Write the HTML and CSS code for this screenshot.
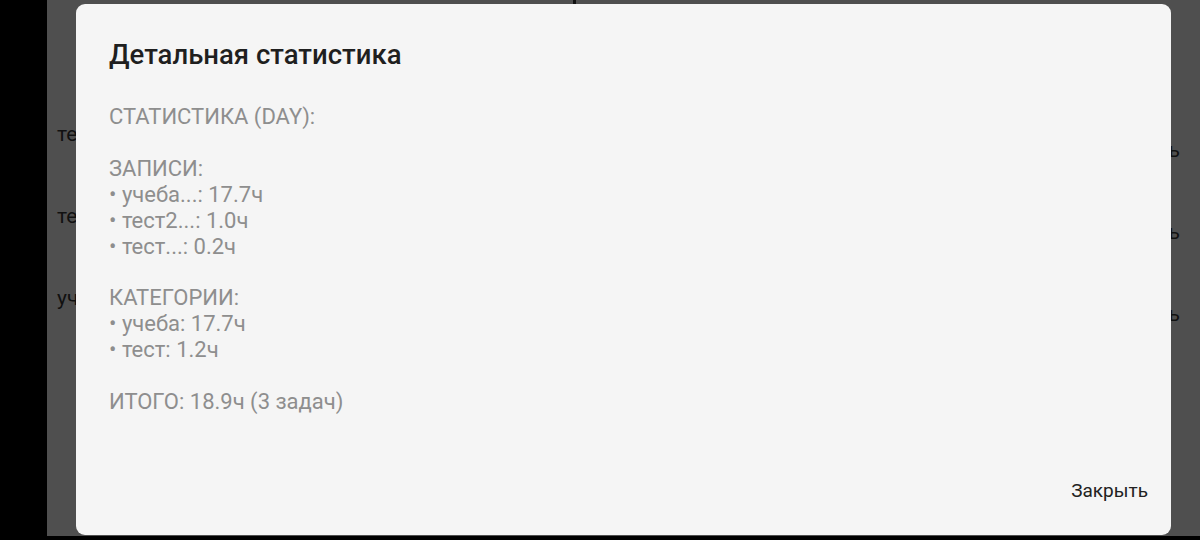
FILE: index.html
```html
<!DOCTYPE html>
<html lang="ru">
<head>
<meta charset="utf-8">
<link rel="stylesheet" href="styles.css">
</head>
<body>
<div class="screen">
  <div class="side"></div>
  <div class="app">
    <div class="topmark"></div>
    <div class="list">
      <div class="row"><span class="left">тест2</span><span class="right">Открыть</span></div>
      <div class="row"><span class="left">тест</span><span class="right">Открыть</span></div>
      <div class="row"><span class="left">учеба</span><span class="right">Открыть</span></div>
    </div>
    <div class="dialog">
      <h1 class="title">Детальная статистика</h1>
      <div class="body">СТАТИСТИКА (DAY):

ЗАПИСИ:
• учеба...: 17.7ч
• тест2...: 1.0ч
• тест...: 0.2ч

КАТЕГОРИИ:
• учеба: 17.7ч
• тест: 1.2ч

ИТОГО: 18.9ч (3 задач)</div>
      <div class="actions"><span class="btn">Закрыть</span></div>
    </div>
  </div>
</div>
</body>
</html>
```
FILE: styles.css
```css
html, body {
  margin: 0;
  padding: 0;
  background: #000;
  width: 1200px;
  height: 540px;
  overflow: hidden;
  font-family: Roboto, "Noto Sans", sans-serif;
}
.screen {
  display: flex;
  height: 536px;
}
.side {
  width: 47px;
  background: #000;
  flex: none;
}
.app {
  position: relative;
  flex: 1;
  background: #4f4f4f;
}
.topmark {
  position: absolute;
  left: 526px;
  top: 0;
  width: 3px;
  height: 4px;
  background: #111;
}
.list {
  display: flex;
  flex-direction: column;
  gap: 58px;
  padding: 122px 0 0 10px;
}
.row {
  display: flex;
  justify-content: space-between;
  align-items: flex-start;
  height: 24px;
  font-size: 21px;
  line-height: 24px;
  color: #111;
}
.right {
  margin-top: 16px;
  margin-right: 20px;
}
.dialog {
  position: absolute;
  left: 29px;
  top: 4px;
  width: 1095px;
  height: 531px;
  box-sizing: border-box;
  background: #f5f5f5;
  border-radius: 9px;
  padding: 35px 23px 32px 33px;
  display: flex;
  flex-direction: column;
}
.title {
  margin: 0;
  font-size: 27.5px;
  line-height: 32px;
  font-weight: 500;
  color: #1f1f1f;
}
.body {
  margin-top: 33px;
  white-space: pre-line;
  font-size: 22px;
  line-height: 25.9px;
  color: #8e8e8e;
}
.actions {
  margin-top: auto;
  display: flex;
  justify-content: flex-end;
}
.btn {
  font-size: 19px;
  line-height: 24px;
  color: #222;
}
```
